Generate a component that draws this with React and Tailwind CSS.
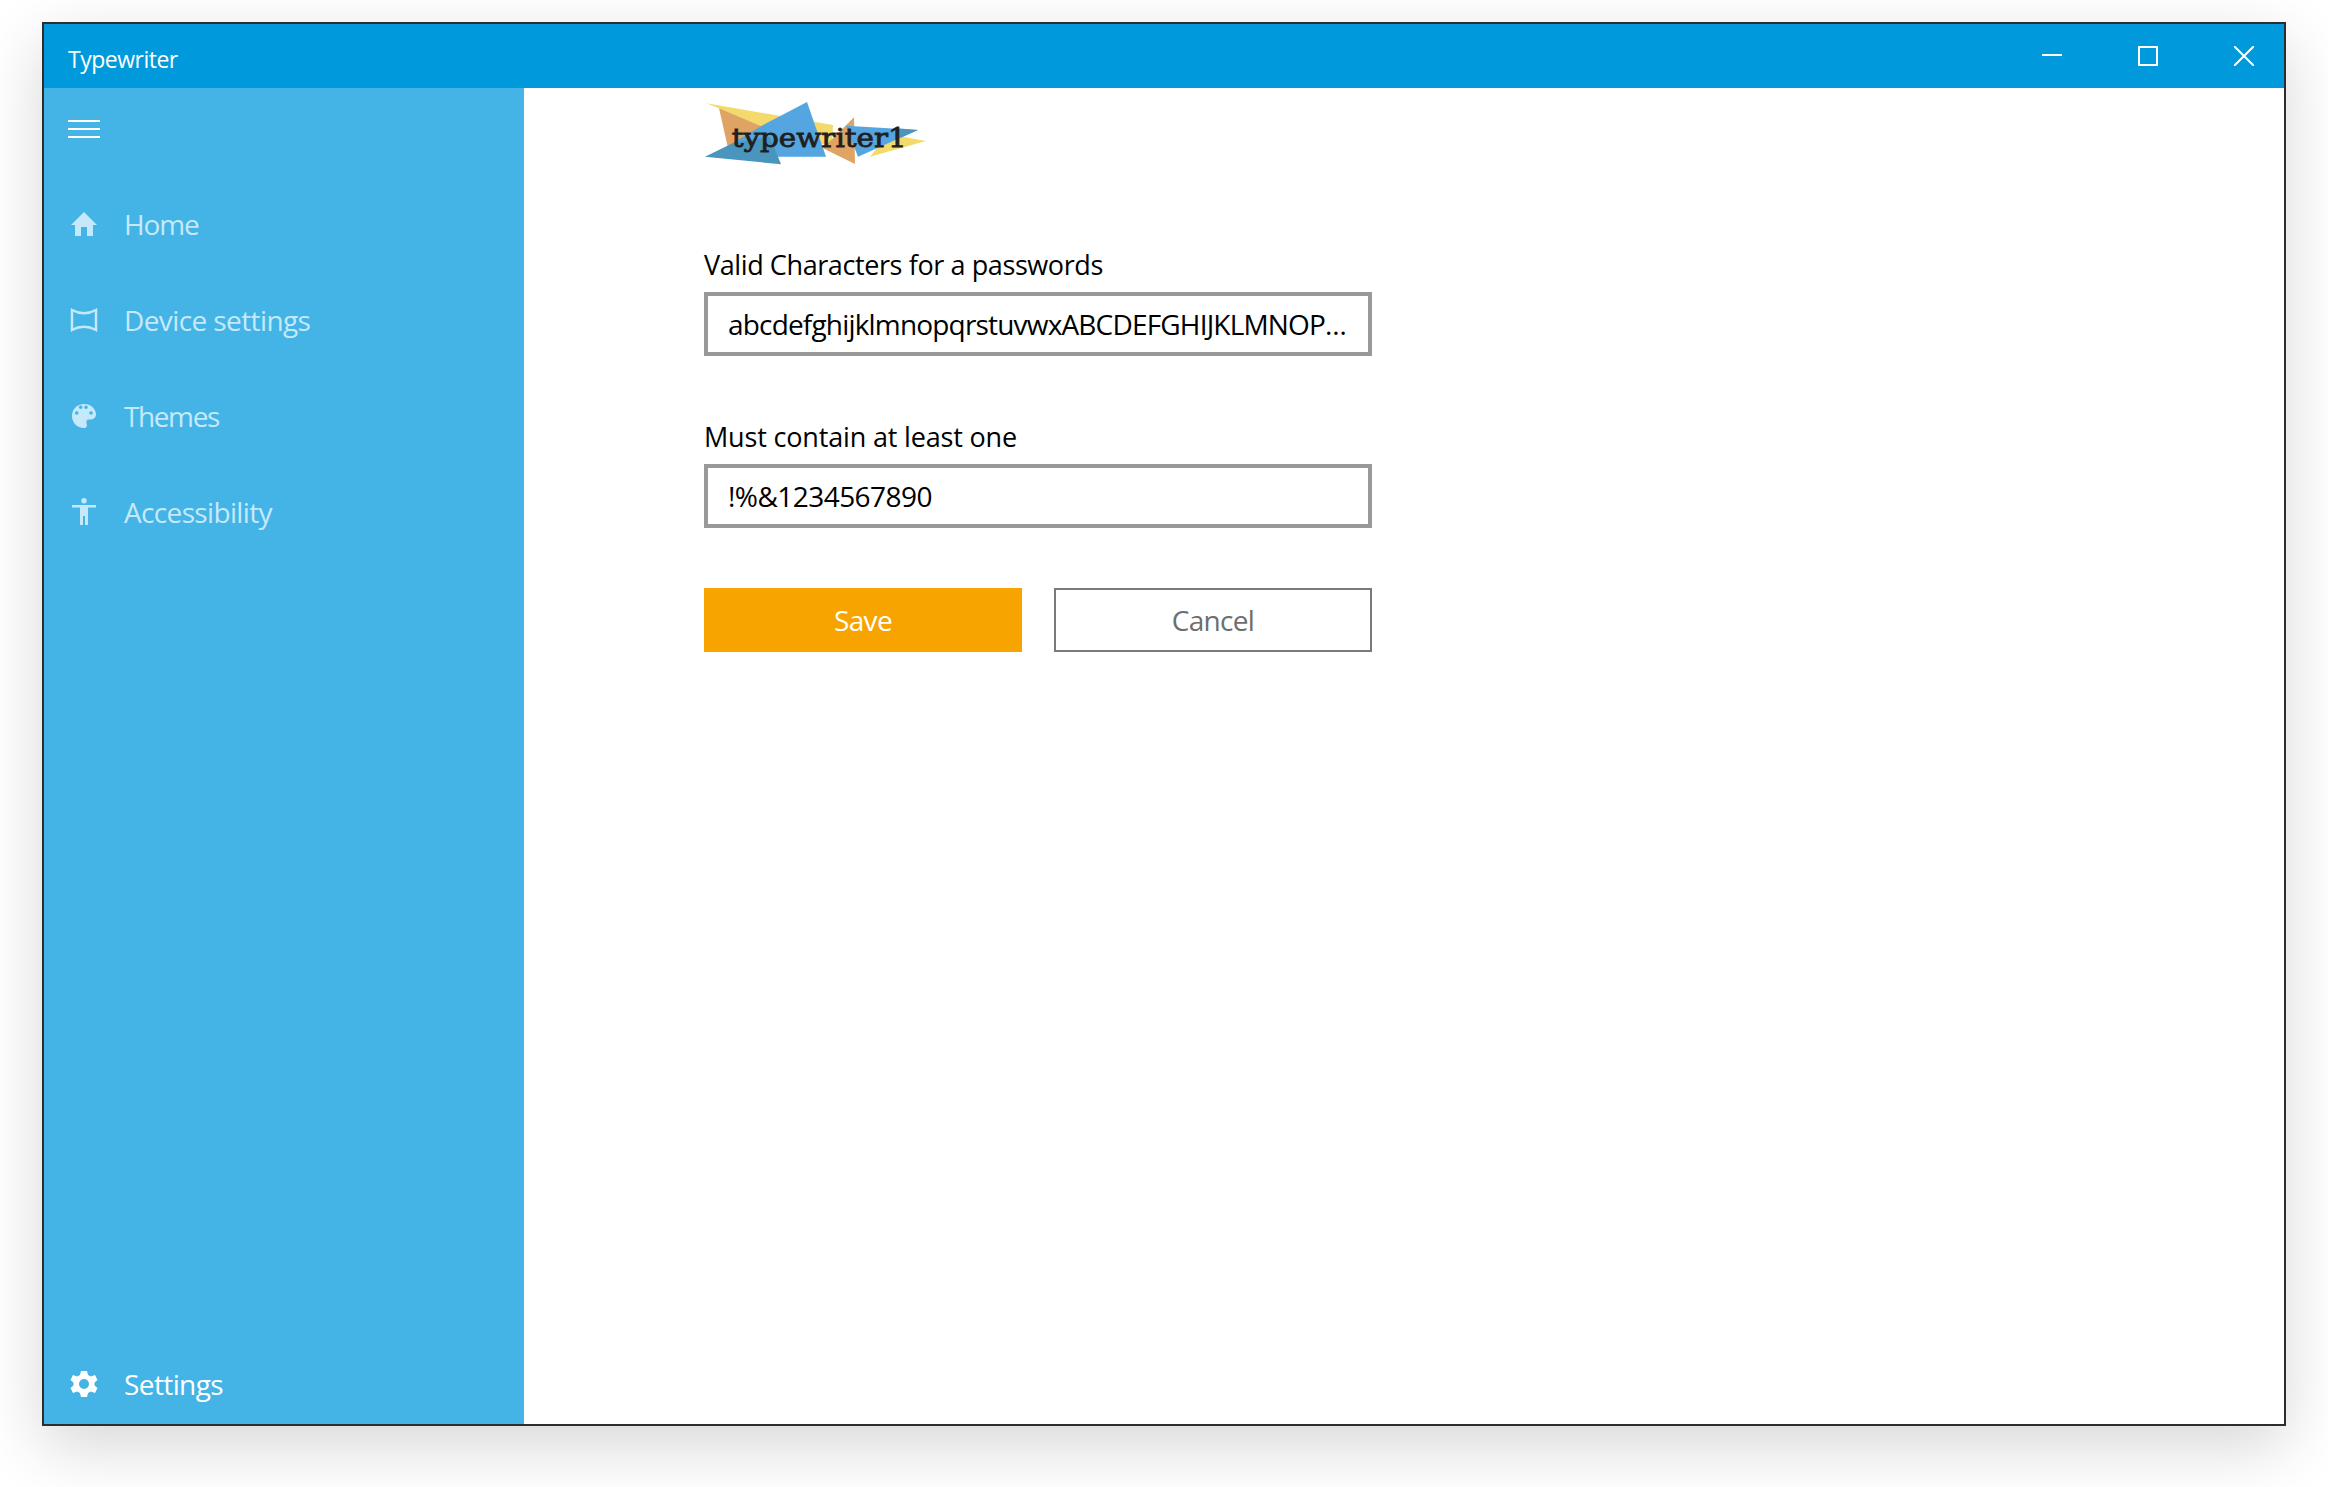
import { useState } from 'react';

const HomeIcon = () => (
    <svg width="28" height="24" viewBox="0 0 28 24" fill="currentColor">
        <path d="M14 0 L27 13 L23 13 L23 24 L17 24 L17 15 L11 15 L11 24 L5 24 L5 13 L1 13 Z" />
    </svg>
);

const DeviceIcon = () => (
    <svg width="28" height="24" viewBox="0 0 28 24" fill="none" stroke="currentColor" strokeWidth="2.500">
        <path d="M2 2 Q14 8.500 26 2 L26 22 Q14 15.500 2 22 Z" />
    </svg>
);

const PaletteIcon = () => (
    <svg width="26" height="26" viewBox="0 0 26 26" fill="currentColor">
        <path
            fillRule="evenodd"
            d="M13 1 C20 1 25 6 25 11.500 C25 15 22 16.500 19.500 16.500 L18 16.500 C15.500 16.500 15 18.500 15.500 20 C16.500 23 15.500 25 13 25 C6 25 1 19.500 1 13 C1 6 6 1 13 1 Z M7.900 4.300 a1.800 1.800 0 1 0 3.600 0 a1.800 1.800 0 1 0 -3.600 0 Z M13.200 4.300 a1.800 1.800 0 1 0 3.600 0 a1.800 1.800 0 1 0 -3.600 0 Z M18.200 10 a1.800 1.800 0 1 0 3.600 0 a1.800 1.800 0 1 0 -3.600 0 Z M3.900 10 a1.800 1.800 0 1 0 3.600 0 a1.800 1.800 0 1 0 -3.600 0 Z"
        />
    </svg>
);

const AccessIcon = () => (
    <svg width="26" height="28" viewBox="0 0 26 28" fill="currentColor">
        <circle cx="13" cy="2.700" r="2.700" />
        <path d="M1 7 L25 7 L25 9.500 L17 9.500 L17 27 L14 27 L14 18 L12 18 L12 27 L9 27 L9 9.500 L1 9.500 Z" />
    </svg>
);

const GearIcon = () => (
    <svg width="28" height="28" viewBox="0 0 28 28" fill="currentColor">
        <path
            fillRule="evenodd"
            d="M11 1 L17 1 L18 5 L21 6.500 L25 5 L27.500 10 L24.500 12.500 L24.500 15.500 L27.500 18 L25 23 L21 21.500 L18 23 L17 27 L11 27 L10 23 L7 21.500 L3 23 L0.500 18 L3.500 15.500 L3.500 12.500 L0.500 10 L3 5 L7 6.500 L10 5 Z M14 9 a5 5 0 1 0 0 10 a5 5 0 1 0 0 -10 Z"
        />
    </svg>
);

const Logo = () => (
    <svg width="226" height="66" viewBox="0 0 226 66" className="block">
        <polygon points="2.700,1.300 129,23 128,44.700 59,24.700" fill="#f4da6a" />
        <polygon points="15,6.300 59,24.700 24,46" fill="#dfa364" />
        <polygon points="103,0 122,54.700 59,54.700 29,41 59,23" fill="#55a5e0" />
        <polygon points="1,54.700 29,41 66,34.700 77,62.300" fill="#4a95bd" />
        <polygon points="150,15.300 151,62 119,46.300" fill="#dfa364" />
        <polygon points="199,34.700 222,39 166,54.700 173,46" fill="#f4da6a" />
        <polygon points="142,23.700 214,28 154,54.700" fill="#55a5e0" />
        <polygon points="190,26 214,28 196,36" fill="#4a95bd" />
        <text x="27.700" y="44.700" fontFamily="'DejaVu Serif', serif" fontWeight="400" fontSize="26" textLength="175" lengthAdjust="spacingAndGlyphs" fill="#1f1f1f" stroke="#1f1f1f" strokeWidth="0.800">typewriter1</text>
    </svg>
);

const navItems = [
    { label: 'Home', icon: <HomeIcon />, tracking: 'tracking-[-1.1px]' },
    { label: 'Device settings', icon: <DeviceIcon />, tracking: 'tracking-[-0.6px]' },
    { label: 'Themes', icon: <PaletteIcon />, tracking: 'tracking-[-1.4px]' },
    { label: 'Accessibility', icon: <AccessIcon />, tracking: 'tracking-[-0.65px]' },
];

const Field = ({ label, value, onChange, labelTracking, inputTracking }) => (
    <div className="flex flex-col">
        <label className={`text-[27px] leading-[40px] text-black pt-[1px] h-[40px] ${labelTracking}`}>{label}</label>
        <input
            value={value}
            onChange={(e) => onChange(e.target.value)}
            className={`mt-[8px] w-[668px] h-[64px] border-[4px] border-[#999999] bg-white px-[20px] text-[28px] text-black outline-none truncate ${inputTracking}`}
        />
    </div>
);

const App = () => {
    const [chars, setChars] = useState('abcdefghijklmnopqrstuvwxABCDEFGHIJKLMNOPQRSTUVWXYZ');
    const [required, setRequired] = useState('!%&1234567890');

    return (
        <div className="w-[2328px] h-[1487px] bg-white pl-[42px] pt-[22px] font-['Open_Sans',sans-serif]">
            <div className="w-[2244px] h-[1404px] flex flex-col border-2 border-[#2d2d2d] bg-white shadow-[0_20px_60px_rgba(0,0,0,0.16)]">
                {/* Title bar */}
                <div className="h-[64px] shrink-0 flex items-center bg-[#0099dc] pl-[24px] text-white">
                    <span className="text-[23px] tracking-[-0.5px] mt-[6px]">Typewriter</span>
                    <div className="ml-auto flex h-full items-center">
                        <button className="w-[96px] h-full flex items-center justify-center">
                            <span className="block w-[20px] h-[2px] bg-white -translate-y-[1px]" />
                        </button>
                        <button className="w-[96px] h-full flex items-center justify-center">
                            <span className="block w-[20px] h-[20px] border-2 border-white" />
                        </button>
                        <button className="ml-[8px] w-[80px] h-full flex items-center justify-center">
                            <svg width="20" height="20" viewBox="0 0 20 20" stroke="white" strokeWidth="2">
                                <path d="M0 0 L20 20 M20 0 L0 20" />
                            </svg>
                        </button>
                    </div>
                </div>

                <div className="flex flex-1 min-h-0">
                    {/* Sidebar */}
                    <aside className="w-[480px] shrink-0 flex flex-col bg-[#44b4e6]">
                        <button className="h-[82px] shrink-0 pl-[24px] flex flex-col justify-center gap-[6px]">
                            <span className="block w-[32px] h-[2px] bg-white" />
                            <span className="block w-[32px] h-[2px] bg-white" />
                            <span className="block w-[32px] h-[2px] bg-white" />
                        </button>
                        <nav className="mt-[6px] flex flex-col text-[#c5e9fa]">
                            {navItems.map((item) => (
                                <div key={item.label} className="h-[96px] flex items-center">
                                    <span className="w-[80px] shrink-0 flex justify-center">{item.icon}</span>
                                    <span className={`text-[28px] ${item.tracking}`}>{item.label}</span>
                                </div>
                            ))}
                        </nav>
                        <div className="mt-auto mb-[-8px] h-[96px] flex items-center text-white">
                            <span className="w-[80px] shrink-0 flex justify-center"><GearIcon /></span>
                            <span className="text-[28px] tracking-[-0.6px]">Settings</span>
                        </div>
                    </aside>

                    {/* Form */}
                    <main className="flex-1 pl-[180px] pt-[14px]">
                        <Logo />
                        <div className="mt-[76px] flex flex-col gap-[60px]">
                            <Field
                                label="Valid Characters for a passwords"
                                value={chars}
                                onChange={setChars}
                                labelTracking="tracking-[-0.4px]"
                                inputTracking="tracking-[-0.82px]"
                            />
                            <Field
                                label="Must contain at least one"
                                value={required}
                                onChange={setRequired}
                                labelTracking="tracking-[-0.17px]"
                                inputTracking="tracking-[-0.55px]"
                            />
                        </div>
                        <div className="mt-[60px] flex gap-[32px]">
                            <button className="w-[318px] h-[64px] bg-[#f7a400] text-[28px] tracking-[-0.7px] text-white">Save</button>
                            <button className="w-[318px] h-[64px] border-2 border-[#7a7a7a] bg-white text-[28px] tracking-[-0.7px] text-[#6e6e6e]">Cancel</button>
                        </div>
                    </main>
                </div>
            </div>
        </div>
    );
};

export default App;
